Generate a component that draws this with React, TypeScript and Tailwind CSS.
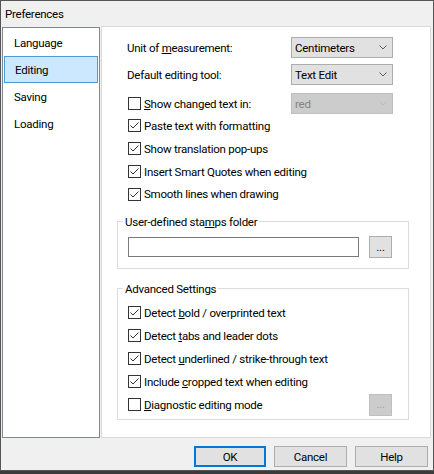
import React from "react";

function Check({ checked }: { checked: boolean }) {
  return (
    <span className="w-[13px] h-[13px] border border-[#333333] bg-white flex items-center justify-center shrink-0">
      {checked && (
        <svg width="11" height="11" viewBox="0 0 11 11">
          <path d="M1.5 5.5 L4 8 L9.5 2.5" fill="none" stroke="#333333" strokeWidth="1" />
        </svg>
      )}
    </span>
  );
}

function Combo({ text, disabled }: { text: string; disabled?: boolean }) {
  return (
    <div
      className={
        disabled
          ? "w-[102px] h-[21px] border border-[#bfbfbf] bg-[#cccccc] text-[#838383] flex items-center justify-between pl-[3px] pr-[5px]"
          : "w-[102px] h-[21px] border border-[#adadad] bg-[#e1e1e1] text-black flex items-center justify-between pl-[3px] pr-[5px]"
      }
    >
      <span className="pt-[1px]">{text}</span>
      <svg width="8" height="5" viewBox="0 0 8 5">
        <path d="M0.5 0.5 L4 4 L7.5 0.5" fill="none" stroke={disabled ? "#bdbdbd" : "#606060"} strokeWidth="1" />
      </svg>
    </div>
  );
}

function CheckRow({ checked, children, h }: { checked: boolean; children: React.ReactNode; h: string }) {
  return (
    <div className={`flex items-center pl-[26px] gap-[3px] ${h}`}>
      <Check checked={checked} />
      <span className="pt-[1px]">{children}</span>
    </div>
  );
}

function Dots({ disabled }: { disabled?: boolean }) {
  return (
    <div
      className={
        disabled
          ? "w-[23px] h-[22px] border border-[#bfbfbf] bg-[#cccccc] text-[#a0a0a0] flex items-center justify-center leading-none"
          : "w-[23px] h-[22px] border border-[#adadad] bg-[#e1e1e1] text-black flex items-center justify-center leading-none"
      }
    >
      <span className="mt-[1px]">...</span>
    </div>
  );
}

export default function App() {
  return (
    <div className="w-[434px] h-[474px] bg-[#3b3b3b] font-['Roboto','Segoe_UI',sans-serif] text-[11.5px] tracking-[-0.25px] text-black leading-[15px]">
      <div className="w-[434px] h-[471px] border border-[#555555] bg-[#f0f0f0] flex flex-col">
        <div className="h-[25px] flex items-center pl-[4px] pt-[1px]">Preferences</div>
        <div className="flex items-start h-[412px]">
          <div className="ml-[1px] mt-[1px] w-[98px] h-[411px] border border-[#828790] bg-white pt-[1px] flex flex-col">
            <div className="h-[27px] flex items-center pl-[11px] pt-[1px]">Language</div>
            <div className="h-[27px] mx-[1px] flex items-center pl-[10px] pt-[1px] bg-[#cce8ff] border border-[#4d9bd8]">Editing</div>
            <div className="h-[27px] flex items-center pl-[11px] pt-[1px]">Saving</div>
            <div className="h-[27px] flex items-center pl-[11px] pt-[1px]">Loading</div>
          </div>
          <div className="ml-[1px] w-[330px] h-[412px] border border-[#d9d9d9] bg-white flex flex-col">
            <div className="mt-[10px] h-[21px] flex items-center pl-[25px]">
              <span className="w-[164px] pt-[1px]">
                Unit of <span className="underline">m</span>easurement:
              </span>
              <Combo text="Centimeters" />
            </div>
            <div className="mt-[6px] h-[21px] flex items-center pl-[25px]">
              <span className="w-[164px] pt-[1px]">Default editing tool:</span>
              <Combo text="Text Edit" />
            </div>
            <div className="mt-[8px] h-[21px] flex items-center pl-[26px]">
              <div className="w-[163px] flex items-center gap-[3px]">
                <Check checked={false} />
                <span className="pt-[1px]">
                  <span className="underline">S</span>how changed text in:
                </span>
              </div>
              <Combo text="red" disabled />
            </div>
            <CheckRow checked h="h-[23px]">Paste text with formatting</CheckRow>
            <CheckRow checked h="h-[23px]">Show translation pop-ups</CheckRow>
            <CheckRow checked h="h-[23px]">Insert Smart Quotes when editing</CheckRow>
            <CheckRow checked h="h-[22px]">Smooth lines when drawing</CheckRow>

            <div className="relative mt-[16px] ml-[15px] w-[292px] h-[48px] border border-[#dcdcdc]">
              <span className="absolute -top-[7px] left-[5px] bg-white px-[2px]">
                User-defined sta<span className="underline">m</span>ps folder
              </span>
              <div className="mt-[14px] ml-[10px] h-[22px] flex items-center gap-[10px]">
                <div className="w-[231px] h-[20px] border border-[#7a7a7a] bg-white" />
                <Dots />
              </div>
            </div>

            <div className="relative mt-[19px] ml-[15px] w-[292px] h-[132px] border border-[#dcdcdc] pt-[12px]">
              <span className="absolute -top-[7px] left-[5px] bg-white px-[2px]">Advanced Settings</span>
              <div className="-ml-[16px]">
                <CheckRow checked h="h-[23px]">
                  Detect <span className="underline">b</span>old / overprinted text
                </CheckRow>
                <CheckRow checked h="h-[23px]">
                  Detect <span className="underline">t</span>abs and leader dots
                </CheckRow>
                <CheckRow checked h="h-[23px]">
                  Detect <span className="underline">u</span>nderlined / strike-through text
                </CheckRow>
                <CheckRow checked h="h-[23px]">
                  Include <span className="underline">c</span>ropped text when editing
                </CheckRow>
                <div className="h-[23px] flex items-center pl-[26px]">
                  <div className="w-[241px] flex items-center gap-[3px]">
                    <Check checked={false} />
                    <span className="pt-[1px]">
                      <span className="underline">D</span>iagnostic editing mode
                    </span>
                  </div>
                  <Dots disabled />
                </div>
              </div>
            </div>
          </div>
        </div>
        <div className="flex-1 flex justify-end items-start pt-[8px] pr-[5px] gap-[8px]">
          <button className="w-[72px] h-[21px] border-2 border-[#0078d7] bg-[#e1e1e1] flex items-center justify-center pt-[1px]">OK</button>
          <button className="w-[73px] h-[21px] border border-[#adadad] bg-[#e1e1e1] flex items-center justify-center pt-[1px]">Cancel</button>
          <button className="w-[73px] h-[21px] border border-[#adadad] bg-[#e1e1e1] flex items-center justify-center pt-[1px]">Help</button>
        </div>
      </div>
    </div>
  );
}
